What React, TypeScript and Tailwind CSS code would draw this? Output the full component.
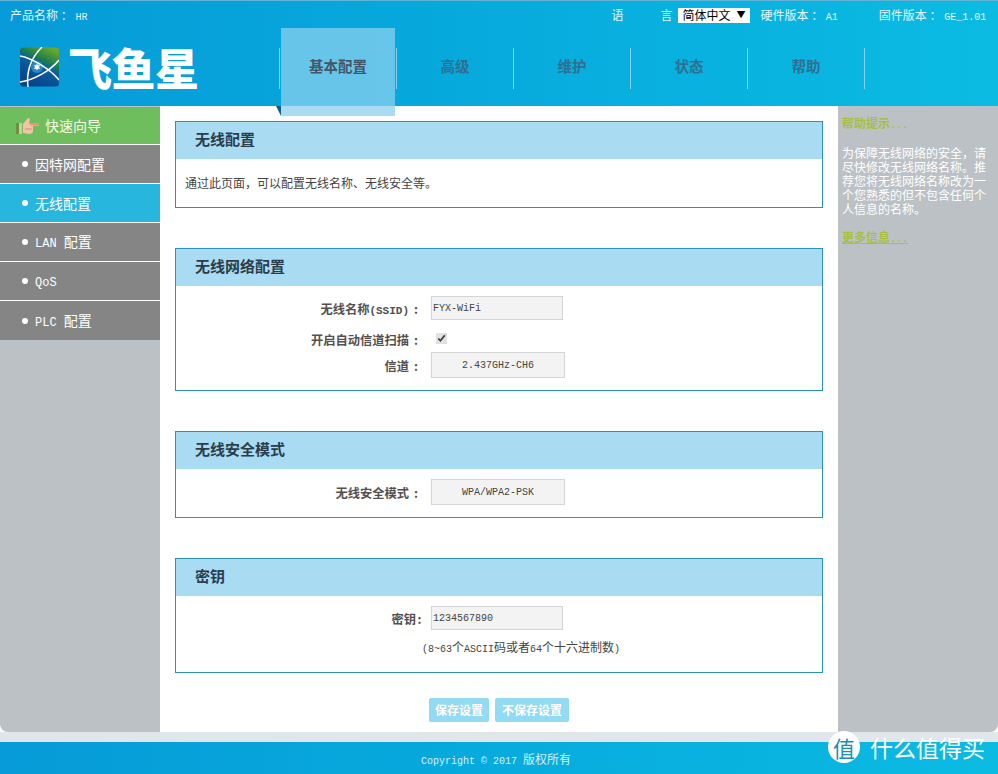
import React from 'react';

const latin = "font-['Liberation_Mono',monospace] text-[10px]";

const sideItems = [
  { label: <>因特网配置</> },
  { label: <>无线配置</>, active: true },
  { label: <><span className="font-['Liberation_Mono',monospace] text-[12px]">LAN </span>配置</> },
  { label: <span className="font-['Liberation_Mono',monospace] text-[12px]">QoS</span> },
  { label: <><span className="font-['Liberation_Mono',monospace] text-[12px]">PLC </span>配置</> },
];

const navItems = ['基本配置', '高级', '维护', '状态', '帮助'];

function Logo() {
  return (
    <svg width="39" height="40" viewBox="0 0 39 40" className="shrink-0">
      <defs>
        <linearGradient id="logoBg" x1="0.75" y1="0" x2="0.25" y2="1">
          <stop offset="0" stopColor="#6aa82c" />
          <stop offset="0.3" stopColor="#1f7f4c" />
          <stop offset="0.45" stopColor="#0b5f9c" />
          <stop offset="1" stopColor="#083f88" />
        </linearGradient>
      </defs>
      <rect width="39" height="39" y="0.5" rx="3" fill="url(#logoBg)" />
      <circle cx="17" cy="20" r="6" fill="#2a86c4" />
      <path d="M0 9 C12 11 30 22 39 33" fill="none" stroke="#fff" strokeWidth="1.5" />
      <path d="M0 35 C14 33 30 24 39 13" fill="none" stroke="#fff" strokeWidth="1.5" />
      <path d="M22 0 C12 10 6 24 8 40" fill="none" stroke="#fff" strokeWidth="1.5" />
      <path d="M17 16.5 l1 1.8 2.1-.1 -1.1 1.8 1.1 1.8 -2.1-.1 -1 1.8 -1-1.8 -2.1 .1 1.1-1.8 -1.1-1.8 2.1 .1z" fill="#fff" />
    </svg>
  );
}

function ThumbIcon() {
  return (
    <svg width="24" height="18" viewBox="0 0 24 18" className="shrink-0">
      <rect x="0" y="6" width="6" height="11" fill="#6f8f3a" />
      <rect x="3" y="6" width="3" height="11" fill="#c9cf9a" />
      <path d="M7 7 L12 1 L14 2 L13 6 L23 6.5 L23 8.5 L17 9 L17 15 Q16 17 13 17 L7 16 Z" fill="#f3c3a8" />
      <path d="M13 6 L23 6.5 L23 8.5 L15 8.5 Z" fill="#e8916c" />
      <path d="M9 11 L16 11 L16 13 L9 13 Z" fill="#e9a788" />
    </svg>
  );
}

function Card({ title, children, className }: { title: string; children: React.ReactNode; className?: string }) {
  return (
    <section className={`border border-[#2a93b5] ${className ?? ''}`}>
      <h2 className="h-[37px] bg-[#a9dcf2] pl-[19px] text-[15px] leading-[33px] font-bold text-[#2b3d4c]">{title}</h2>
      {children}
    </section>
  );
}

function FormRow({ label, tight, children, className }: { label: React.ReactNode; tight?: boolean; children: React.ReactNode; className?: string }) {
  return (
    <div className={`flex items-center ${className ?? ''}`}>
      <label className="w-[255px] shrink-0 pt-[3px] pr-[8px] text-right text-[12.25px] font-bold whitespace-pre text-[#55504f]">
        {label}
        <span className={`inline-block text-center ${tight ? 'w-[7px]' : 'w-[14px]'}`}>:</span>
      </label>
      {children}
    </div>
  );
}

export default function App() {
  return (
    <div className="relative flex h-[774px] w-[998px] flex-col overflow-hidden bg-white font-['Noto_Sans_CJK_SC',sans-serif]">
      {/* Header */}
      <header className="relative h-[106px] shrink-0 border-t border-[#62b3d6] bg-gradient-to-r from-[#069bd8] to-[#0bbbe2] text-white">
        <div className="flex h-[28px] items-center text-[12px] whitespace-nowrap text-[#e3f5fb]">
          <span className="ml-[10px] whitespace-pre">产品名称 ： <span className={latin}>HR</span></span>
          <span className="ml-[524px]">语</span>
          <span className="ml-[37px]">言</span>
          <span className="relative ml-[6px] flex h-[15px] w-[72px] shrink-0 items-center bg-white pl-[4px] text-[12px] text-black">
            简体中文
            <span className="absolute top-0 right-[5px] text-[9px] leading-[14px]">▼</span>
          </span>
          <span className="ml-[10px] whitespace-pre">硬件版本 ： <span className={latin}>A1</span></span>
          <span className="ml-[41px] whitespace-pre">固件版本 ： <span className={latin}>GE_1.01</span></span>
        </div>
        {/* active tab sits behind the nav labels and runs past the header's lower edge */}
        <div className="absolute top-[27px] left-[281px] h-[88px] w-[114px] bg-[#7fcdec]/80">
          <div className="absolute right-0 bottom-0 left-0 h-[10px] bg-[#a9dcf2]" />
        </div>
        <div className="absolute top-[105px] left-[276px] h-[10px] w-[5px] bg-[#0b5f87] [clip-path:polygon(0_0,100%_0,100%_100%)]" />
        <div className="flex items-start">
          <div className="mt-[18px] ml-[20px] flex w-[259px] items-center">
            <Logo />
            <span className="ml-[9px] text-[44px] leading-[40px] font-black tracking-[-0.5px] whitespace-nowrap text-white">飞鱼星</span>
          </div>
          <nav className="relative z-10 flex">
            {navItems.map((item, i) => (
              <div key={item} className="flex h-[77px] w-[117px] items-center">
                <span className="mt-[1px] h-[41px] w-px bg-[#7fd4ef]" />
                <a className={`flex flex-1 items-center justify-center pb-[3px] text-[14.5px] font-bold ${i === 0 ? 'text-[#44566a]' : 'text-[#2f6f92]'}`}>
                  {item}
                </a>
              </div>
            ))}
            <span className="mt-[19px] h-[41px] w-px bg-[#7fd4ef]" />
          </nav>
        </div>
      </header>

      {/* Body */}
      <div className="flex min-h-0 flex-1">
        <aside className="w-[160px] shrink-0 rounded-bl-[8px] bg-[#bcc1c5] pt-px text-[14px] text-white">
          <div className="flex h-[38px] items-center border-b border-white bg-[#6fbe5e] pl-[16px] text-[#f4fbe9]">
            <ThumbIcon />
            <span className="ml-[5px]">快速向导</span>
          </div>
          {sideItems.map((item, i) => (
            <div key={i} className={`flex h-[39px] items-center border-b border-white pl-[22px] last:border-b-0 ${item.active ? 'bg-[#27b7de]' : 'bg-[#858585]'}`}>
              <span className="h-[6px] w-[6px] rounded-full bg-white" />
              <span className="ml-[7px] whitespace-pre">{item.label}</span>
            </div>
          ))}
        </aside>

        <main className="min-w-0 flex-1 px-[15px] pt-[15px]">
          <Card title="无线配置">
            <p className="h-[48px] pl-[9px] text-[12px] leading-[47px] text-[#444]">通过此页面，可以配置无线名称、无线安全等。</p>
          </Card>

          <Card title="无线网络配置" className="mt-[40px]">
            <div className="pt-[10px] pb-[12px]">
              <FormRow label={<>无线名称<span className="font-['Liberation_Mono',monospace] text-[11px]">(SSID)</span></>}>
                <span className="flex h-[24px] w-[132px] items-center border border-[#d4d4d4] bg-[#f3f3f3] pl-px font-['Liberation_Mono',monospace] text-[10px] text-[#444]">FYX-WiFi</span>
              </FormRow>
              <FormRow label="开启自动信道扫描" className="h-[32px] pt-[5px]">
                <input type="checkbox" defaultChecked className="ml-[5px] h-[11px] w-[11px] accent-[#e2e2e2]" />
              </FormRow>
              <FormRow label="信道">
                <span className="flex h-[26px] w-[134px] items-center justify-center border border-[#d4d4d4] bg-[#f3f3f3] font-['Liberation_Mono',monospace] text-[10px] text-[#444]">2.437GHz-CH6</span>
              </FormRow>
            </div>
          </Card>

          <Card title="无线安全模式" className="mt-[40px]">
            <div className="pt-[10px] pb-[12px]">
              <FormRow label="无线安全模式">
                <span className="flex h-[26px] w-[134px] items-center justify-center border border-[#d4d4d4] bg-[#f3f3f3] font-['Liberation_Mono',monospace] text-[10px] text-[#444]">WPA/WPA2-PSK</span>
              </FormRow>
            </div>
          </Card>

          <Card title="密钥" className="mt-[40px]">
            <div className="h-[76px] pt-[10px]">
              <FormRow label="密钥" tight>
                <span className="flex h-[24px] w-[132px] items-center border border-[#d4d4d4] bg-[#f3f3f3] pl-px font-['Liberation_Mono',monospace] text-[10px] text-[#444]">1234567890</span>
              </FormRow>
              <p className="mt-[9px] ml-[246px] text-[12px] leading-[16px] whitespace-nowrap text-[#444]">
                <span className={latin}>(8~63</span>个<span className={latin}>ASCII</span>码或者<span className={latin}>64</span>个十六进制数<span className={latin}>)</span>
              </p>
            </div>
          </Card>

          <div className="mt-[25px] flex gap-[6px] pl-[254px]">
            <button className="h-[24px] w-[60px] rounded-[2px] bg-[#93daf3] text-[12px] font-bold text-white">保存设置</button>
            <button className="h-[24px] w-[74px] rounded-[2px] bg-[#93daf3] text-[12px] font-bold text-white">不保存设置</button>
          </div>
        </main>

        <aside className="w-[160px] shrink-0 rounded-br-[8px] bg-[#bcc1c5] pt-[10px] pr-[10px] pl-[4px] text-[12px] leading-[14px]">
          <h3 className="font-bold text-[#a9bf3f]">帮助提示<span className={latin}>...</span></h3>
          <p className="mt-[13px] text-white">为保障无线网络的安全，请尽快修改无线网络名称。推荐您将无线网络名称改为一个您熟悉的但不包含任何个人信息的名称。</p>
          <a className="mt-[14px] block font-bold text-[#a9bf3f] underline">更多信息<span className={latin}>...</span></a>
        </aside>
      </div>

      <div className="h-[10px] shrink-0 bg-[#e0e6ea]" />

      {/* Footer */}
      <footer className="flex h-[32px] shrink-0 items-center justify-center bg-gradient-to-r from-[#069bd8] to-[#0bbbe2] pr-[6px] text-[12px] text-[#d4f1fa]">
        <span className="mt-[2px] whitespace-pre"><span className={latin}>Copyright © 2017 </span>版权所有</span>
      </footer>

      {/* Watermark */}
      <div className="absolute top-[731px] left-[828px] flex items-center text-white">
        <span className="flex h-[32px] w-[32px] items-center justify-center rounded-full bg-white text-[22px] leading-none text-[#1d8fb4]">值</span>
        <span className="ml-[10px] text-[23px] leading-none whitespace-nowrap">什么值得买</span>
      </div>
    </div>
  );
}
